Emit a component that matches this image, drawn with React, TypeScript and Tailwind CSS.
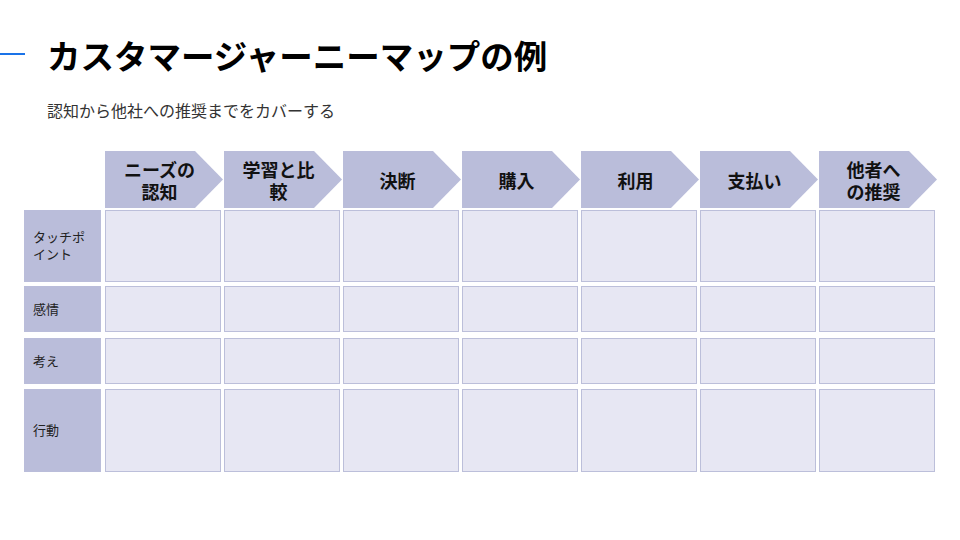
import React from 'react';

const STAGES: string[][] = [
  ['ニーズの', '認知'],
  ['学習と比', '較'],
  ['決断'],
  ['購入'],
  ['利用'],
  ['支払い'],
  ['他者へ', 'の推奨'],
];

const ROWS: { label: string[]; h: string; mt: string }[] = [
  { label: ['タッチポ', 'イント'], h: 'h-[72px]', mt: 'mt-[2px]' },
  { label: ['感情'], h: 'h-[46px]', mt: 'mt-[4px]' },
  { label: ['考え'], h: 'h-[46px]', mt: 'mt-[6px]' },
  { label: ['行動'], h: 'h-[83px]', mt: 'mt-[5px]' },
];

function Lines({ lines }: { lines: string[] }) {
  return (
    <>
      {lines.map((l, i) => (
        <React.Fragment key={l}>
          {i > 0 && <br />}
          {l}
        </React.Fragment>
      ))}
    </>
  );
}

export default function App() {
  return (
    <div className="w-[960px] h-[540px] bg-white overflow-hidden text-[#222] font-['Noto_Sans_CJK_JP','Noto_Sans',sans-serif]">
      {/* Title */}
      <div className="flex items-start pt-[36px]">
        <div className="w-[25px] h-[2px] mt-[17px] bg-[#1a73e8]" />
        <h1 className="ml-[22px] text-[33.5px] leading-[38px] font-bold text-black">
          カスタマージャーニーマップの例
        </h1>
      </div>
      <p className="ml-[47px] mt-[24px] text-[16px] leading-[24px] text-[#333]">
        認知から他社への推奨までをカバーする
      </p>

      <div className="ml-[24px] mt-[29px]">
        {/* Stage arrows */}
        <div className="flex pl-[81px]">
          {STAGES.map((s, i) => (
            <div
              key={i}
              className="w-[119px] h-[57px] shrink-0 bg-[#babdda] [clip-path:polygon(0_0,90px_0,118px_50%,90px_100%,0_100%)] flex items-center justify-center pr-[10px]"
            >
              <p className="text-center text-[18px] leading-[22px] font-bold text-[#111]">
                <Lines lines={s} />
              </p>
            </div>
          ))}
        </div>

        {/* Rows */}
        {ROWS.map((r, i) => (
          <div key={i} className={`flex gap-[4px] ${r.mt} ${r.h}`}>
            <div className="w-[77px] h-full bg-[#babdda] flex items-center pl-[9px] pb-[2px]">
              <p className="text-[13px] leading-[17px] text-[#222]">
                <Lines lines={r.label} />
              </p>
            </div>
            <div className="flex gap-[3px]">
              {STAGES.map((_, j) => (
                <div key={j} className="w-[116px] h-full border border-[#bcbfda] bg-[#e7e7f3]" />
              ))}
            </div>
          </div>
        ))}
      </div>
    </div>
  );
}
